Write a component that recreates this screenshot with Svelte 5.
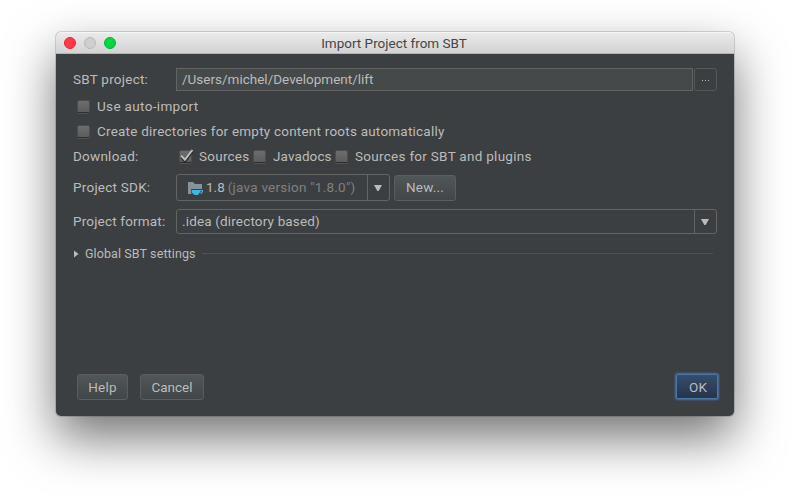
<script>
  let autoImport = $state(false);
  let createDirs = $state(false);
  let downloads = $state([
    { label: 'Sources', checked: true, cls: 'sources' },
    { label: 'Javadocs', checked: false, cls: 'javadocs' },
    { label: 'Sources for SBT and plugins', checked: false, cls: 'plugins' }
  ]);
</script>

{#snippet box(checked)}
  <span class="box" class:checked>
    {#if checked}
      <svg width="17" height="17" viewBox="0 0 17 17">
        <path d="M3.4 7.2 L7 11.4 L14.2 1.6" fill="none" stroke="#26292a" stroke-width="2.2" transform="translate(0 1.2)" />
        <path d="M3.2 6.6 L6.9 10.8 L14.4 1" fill="none" stroke="#c0c0c0" stroke-width="2" />
      </svg>
    {/if}
  </span>
{/snippet}

{#snippet arrow()}
  <svg class="arrow" width="10" height="8" viewBox="0 0 10 8"><path d="M1 1h8L5.6 7H4.4z" fill="#bbb" /></svg>
{/snippet}

<main>
  <section class="window">
    <header>
      <div class="lights"><i class="red"></i><i class="gray"></i><i class="green"></i></div>
      <span class="title">Import Project from SBT</span>
    </header>
    <div class="content">
      <div class="row project">
        <span class="label">SBT project:</span>
        <div class="field"><span>/Users/michel/Development/lift</span></div>
        <button class="browse" aria-label="Browse"><i></i><i></i><i></i></button>
      </div>
      <button class="check" onclick={() => (autoImport = !autoImport)}>{@render box(autoImport)}<span class="t-auto">Use auto-import</span></button>
      <button class="check" onclick={() => (createDirs = !createDirs)}>{@render box(createDirs)}<span class="t-dirs">Create directories for empty content roots automatically</span></button>
      <div class="row download">
        <span class="label">Download:</span>
        {#each downloads as d}
          <button class="option {d.cls}" onclick={() => (d.checked = !d.checked)}>{@render box(d.checked)}<span>{d.label}</span></button>
        {/each}
      </div>
      <div class="row sdk">
        <span class="label">Project SDK:</span>
        <div class="combo small">
          <svg class="folder" width="17" height="15" viewBox="0 0 17 15">
            <path d="M1 1h5l2 2h7v10H1z" fill="#87939a" />
            <path d="M4 8h12.5v3.4h-2L12 14.4H6.5L4 12z" fill="#3c3f41" />
            <path d="M4.5 9H16v2.6h-3.2L11 14H7.4L4.8 11.4z" fill="#40b6e0" />
            <path d="M13.2 9.8h1.7v.9h-1.7z" fill="#3c3f41" />
          </svg>
          <span class="value"><span class="t-ver">1.8</span><span class="muted">(java version "1.8.0")</span></span>
          <span class="drop">{@render arrow()}</span>
        </div>
        <button class="btn new"><span>New...</span></button>
      </div>
      <div class="row format">
        <span class="label">Project format:</span>
        <div class="combo wide">
          <span class="value"><span class="t-idea">.idea (directory based)</span></span>
          <span class="drop">{@render arrow()}</span>
        </div>
      </div>
      <div class="row global">
        <svg width="5" height="8" viewBox="0 0 5 8"><path d="M0 .5v7L4.6 4z" fill="#bbb" /></svg>
        <span class="t-global">Global SBT settings</span>
        <hr />
      </div>
      <footer>
        <button class="btn help"><span>Help</span></button>
        <button class="btn cancel"><span>Cancel</span></button>
        <button class="ok"><span>OK</span></button>
      </footer>
    </div>
  </section>
</main>

<style>
  :global(body) { margin: 0; background: #fff; }
  main {
    box-sizing: border-box; width: 790px; height: 496px; padding: 32px 56px 0;
    overflow: hidden; background: #fff;
    font: 13.5px/15px Roboto, "Liberation Sans", sans-serif; color: #bbb; letter-spacing: 0.24px;
  }
  .window {
    display: flex; flex-direction: column; width: 678px; height: 384px; border-radius: 5px;
    background: #3c3f41;
    box-shadow: 0 0 0 1px rgba(0, 0, 0, 0.14), 0 22px 50px rgba(0, 0, 0, 0.55);
  }
  header {
    display: grid; grid-template-columns: 1fr auto 1fr; align-items: center; box-sizing: border-box;
    height: 22px; padding-right: 2px; border-bottom: 1px solid #b2b2b2; border-radius: 5px 5px 0 0;
    background: linear-gradient(#ebebeb, #d3d3d3); box-shadow: inset 0 1px #f6f6f6; color: #464646;
  }
  .title { letter-spacing: 0; padding-top: 1px; }
  .lights { display: flex; gap: 8px; padding-left: 8px; }
  .lights i { box-sizing: border-box; width: 12px; height: 12px; border-radius: 50%; border: 1px solid; }
  .red { background: #ff3b47; border-color: #e52533 !important; }
  .gray { background: #cfcfcf; border-color: #b9b9b9 !important; }
  .green { background: #00d742; border-color: #00b52f !important; }
  .content { display: flex; flex-direction: column; padding: 14px 15px 0 17px; }
  button { margin: 0; padding: 0; border: 0; background: none; font: inherit; color: inherit; letter-spacing: inherit; }
  span { white-space: nowrap; }
  .row { display: flex; align-items: center; }
  .label { width: 103px; flex: none; }
  .project { height: 23px; }
  .field {
    box-sizing: border-box; width: 517px; height: 23px; padding: 3px 5px;
    border: 1px solid #646464; background: #45494a; letter-spacing: 0;
  }
  .browse {
    display: flex; gap: 2px; align-items: center; justify-content: center; box-sizing: border-box;
    width: 23px; height: 23px; margin-left: 1px; border: 1px solid #56595b; border-radius: 3px;
  }
  .browse i { width: 1px; height: 1px; background: #bbb; margin-top: 2px; }
  .check { display: flex; align-items: center; gap: 6px; height: 25px; padding-left: 4px; align-self: flex-start; }
  .project + .check { margin-top: 3px; }
  .t-auto { letter-spacing: 0.34px; }
  .t-dirs { letter-spacing: 0.22px; }
  .box {
    display: block; box-sizing: border-box; flex: none; width: 13px; height: 13px; border-radius: 2px;
    border: 1px solid #4b4d4e; border-bottom-color: #2c2e2f; background: linear-gradient(#6d6d6d, #5c5c5c);
    box-shadow: 0 1px #505354; margin-right: 1px;
  }
  .box svg { display: block; margin: -2px 0 0 -2px; }
  .download { height: 25px; }
  .option { display: flex; align-items: center; gap: 6px; height: 25px; }
  .sources { margin-left: 3px; width: 74px; }
  .javadocs { width: 82px; letter-spacing: 0.1px; }
  .plugins { letter-spacing: 0.28px; }
  .sdk { height: 27px; margin-top: 5px; }
  .combo { display: flex; align-items: center; box-sizing: border-box; border: 1px solid #646464; border-radius: 3px; }
  .small { width: 214px; height: 27px; padding-left: 10px; }
  .folder { margin: 1px 2px 0 0; }
  .value { flex: 1; display: flex; }
  .t-ver { letter-spacing: 0; }
  .muted { margin-left: 3px; color: #808080; }
  .t-idea { letter-spacing: 0.16px; }
  .drop { display: flex; align-items: center; justify-content: center; align-self: stretch; width: 21px; border-left: 1px solid #646464; }
  .arrow { margin-right: 2px; }
  .btn {
    box-sizing: border-box; height: 26px; border: 1px solid #5a5e60; border-radius: 3px;
    background: linear-gradient(#515658, #414648); text-align: center; line-height: 16px;
  }
  .new { width: 62px; margin-left: 4px; padding-bottom: 1px; }
  .format { height: 25px; margin-top: 8px; }
  .format .label { letter-spacing: 0.18px; }
  .wide { width: 541px; height: 25px; padding-left: 5px; }
  .global { height: 19px; margin-top: 10px; }
  .t-global { margin: 1px 0 0 6px; font-size: 12.5px; line-height: 16px; letter-spacing: 0.1px; }
  .global svg { margin-left: 1px; }
  .global hr { flex: 1; height: 1px; margin: 0 6px 0 6px; border: 0; background: #515151; }
  footer { display: flex; margin: 109px -2px 0 4px; align-items: center; height: 30px; }
  .help { width: 51px; }
  .cancel { width: 64px; margin-left: 12px; letter-spacing: 0; }
  .ok {
    box-sizing: border-box; width: 42px; height: 25px; margin: 0 3px 1px auto; border: 1px solid #4a76a8; border-radius: 2px; padding-left: 2px; line-height: 16px; letter-spacing: 0;
    background: linear-gradient(#364d6c, #26344c); box-shadow: 0 0 0 1px #44658b, 0 0 1px 2px rgba(67, 103, 143, 0.4);
  }
</style>
